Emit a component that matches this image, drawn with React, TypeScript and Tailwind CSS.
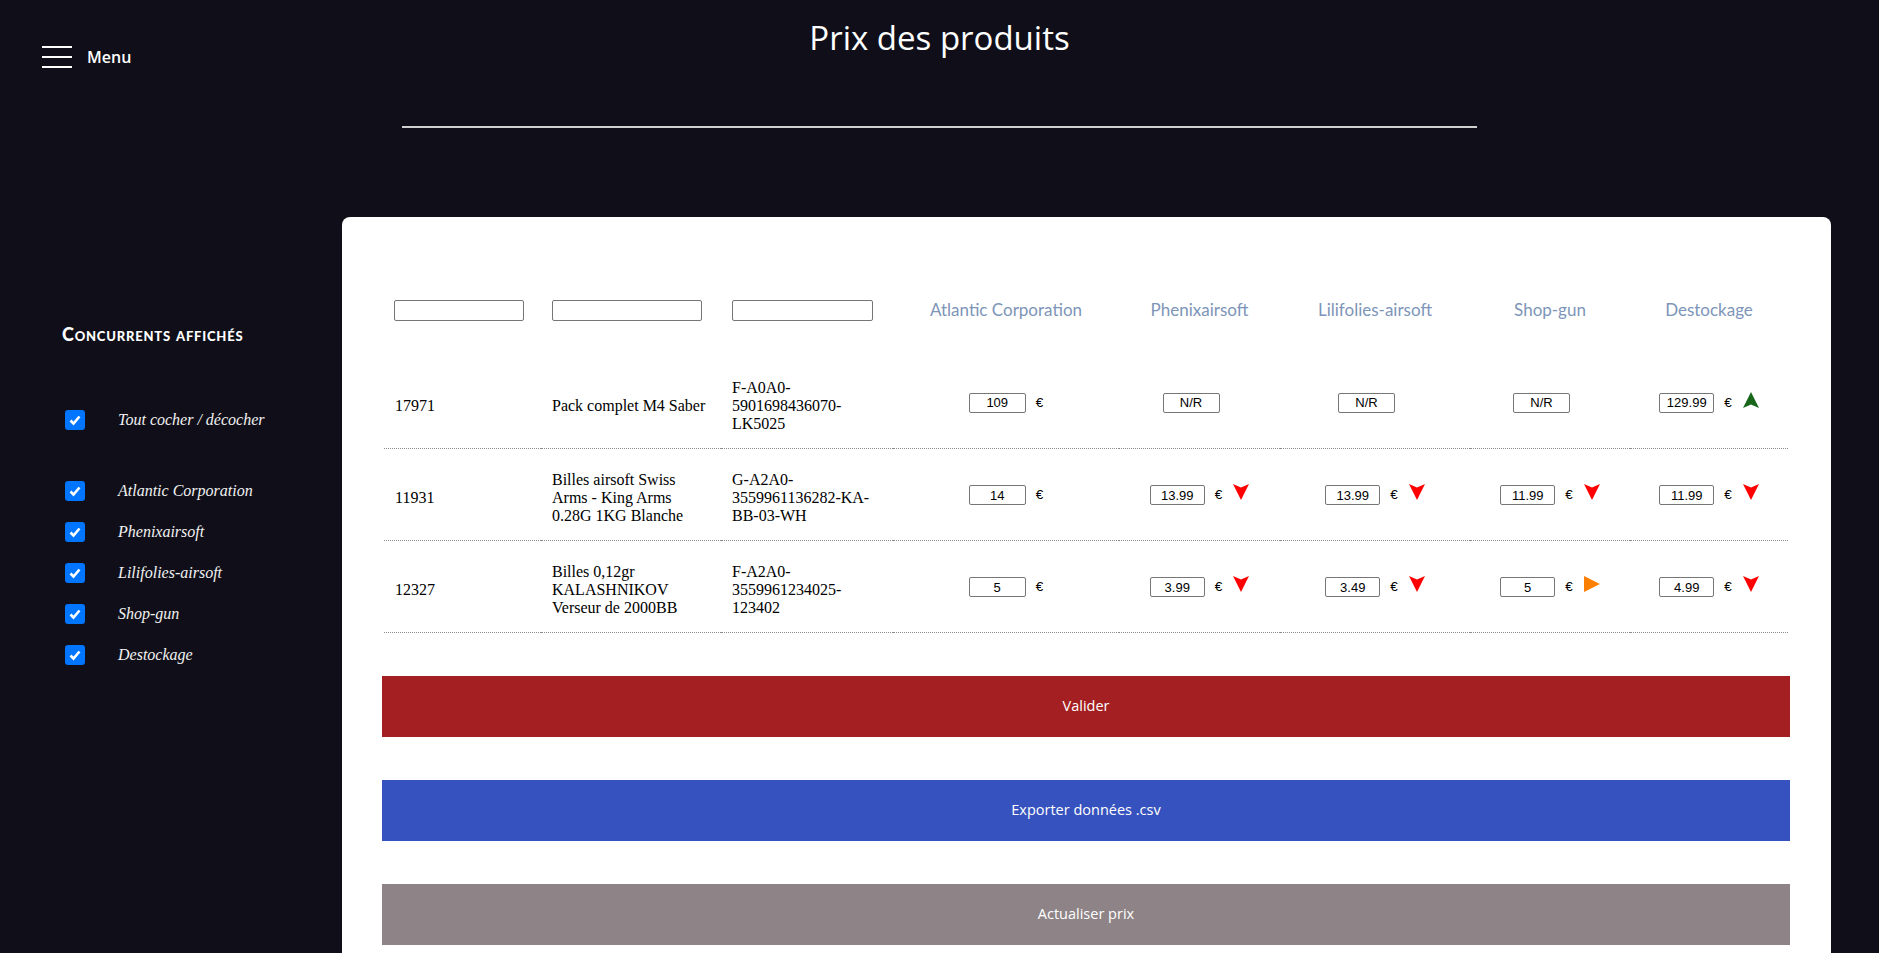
type Trend = 'up' | 'down' | 'flat';

interface Price {
  value?: string;
  trend?: Trend;
}

interface Row {
  id: string;
  name: string;
  ref: string;
  prices: Price[];
}

const competitors = ['Atlantic Corporation', 'Phenixairsoft', 'Lilifolies-airsoft', 'Shop-gun', 'Destockage'];

const rows: Row[] = [
  {
    id: '17971',
    name: 'Pack complet M4 Saber',
    ref: 'F-A0A0-5901698436070-LK5025',
    prices: [{ value: '109' }, {}, {}, {}, { value: '129.99', trend: 'up' }],
  },
  {
    id: '11931',
    name: 'Billes airsoft Swiss Arms - King Arms 0.28G 1KG Blanche',
    ref: 'G-A2A0-3559961136282-KA-BB-03-WH',
    prices: [
      { value: '14' },
      { value: '13.99', trend: 'down' },
      { value: '13.99', trend: 'down' },
      { value: '11.99', trend: 'down' },
      { value: '11.99', trend: 'down' },
    ],
  },
  {
    id: '12327',
    name: 'Billes 0,12gr KALASHNIKOV Verseur de 2000BB',
    ref: 'F-A2A0-3559961234025-123402',
    prices: [
      { value: '5' },
      { value: '3.99', trend: 'down' },
      { value: '3.49', trend: 'down' },
      { value: '5', trend: 'flat' },
      { value: '4.99', trend: 'down' },
    ],
  },
];

const TrendIcon = ({ trend }: { trend: Trend }) => {
  if (trend === 'up') {
    return (
      <svg width="16" height="16" viewBox="0 0 16 16">
        <path d="M8 0 L16 16 L8 12.5 L0 16 Z" fill="#17661a" />
      </svg>
    );
  }
  if (trend === 'flat') {
    return (
      <svg width="16" height="16" viewBox="0 0 16 16">
        <path d="M0 0 L16 8 L0 16 Z" fill="#ff8000" />
      </svg>
    );
  }
  return (
    <svg width="16" height="16" viewBox="0 0 16 16">
      <path d="M0 0 L8 3.5 L16 0 L8 16 Z" fill="#ff0000" />
    </svg>
  );
};

const PriceCell = ({ price, first }: { price: Price; first: boolean }) => {
  const inputCls =
    "h-[20px] border border-[#767676] rounded-[2px] text-center text-[13px] text-black font-['Liberation_Sans',Arial,sans-serif] outline-none";

  if (!price.value) {
    return (
      <div className="flex items-center justify-center">
        <input defaultValue="N/R" className={`${inputCls} w-[57px]`} />
        <span className="w-[17px]"></span>
      </div>
    );
  }

  return (
    <div className="flex items-center justify-center">
      <input defaultValue={price.value} className={`${inputCls} ${first ? 'w-[57px]' : 'w-[55px]'}`} />
      <span className="ml-[10px] text-[13.5px] text-black font-['Liberation_Sans',Arial,sans-serif]">€</span>
      {price.trend && (
        <span className="ml-[11px] mb-[6px] flex">
          <TrendIcon trend={price.trend} />
        </span>
      )}
    </div>
  );
};

const Checkbox = () => (
  <div className="w-5 h-5 rounded-[3px] bg-[#0075ff] flex items-center justify-center">
    <svg width="14" height="14" viewBox="0 0 14 14">
      <path d="M2.5 7.5 L5.5 10.5 L11.5 3.5" stroke="white" strokeWidth="2.6" fill="none" />
    </svg>
  </div>
);

const Sidebar = () => (
  <aside className="w-[342px] shrink-0 pl-[62px] pt-[107px]">
    <h2 className="text-[18px] leading-[20px] font-black text-white [font-variant:small-caps] tracking-[0.8px] font-['Comic_Sans_MS','Lato',sans-serif]">
      Concurrents affichés
    </h2>
    <div className="mt-[66px] ml-[3px] flex items-center gap-[33px] h-5">
      <Checkbox />
      <span className="text-[16px] italic text-[#f2f2f2] font-['Liberation_Serif',serif]">Tout cocher / décocher</span>
    </div>
    <div className="mt-[51px] ml-[3px] flex flex-col gap-[21px]">
      {competitors.map(c => (
        <div key={c} className="flex items-center gap-[33px] h-5">
          <Checkbox />
          <span className="text-[16px] italic text-[#f2f2f2] font-['Liberation_Serif',serif]">{c}</span>
        </div>
      ))}
    </div>
  </aside>
);

const filterCls = 'h-[21px] border border-[#767676] rounded-[2px] bg-white outline-none';
const textCell = 'h-[92px] pl-[11px] pr-[11px] pt-[8px] align-middle border-b border-dotted border-[#8a8a8a]';

export default function App() {
  return (
    <div className="min-h-screen bg-[#100f19] pb-[40px]">
      <header className="grid grid-cols-[1fr_auto_1fr] h-[67px]">
        <div className="pl-[42px] pt-[45px] flex items-center gap-[15px] self-start">
          <div className="w-[30px] flex flex-col gap-[8px]">
            <span className="h-[2px] bg-white"></span>
            <span className="h-[2px] bg-white"></span>
            <span className="h-[2px] bg-white"></span>
          </div>
          <span className="text-[16px] font-semibold text-white font-['Open_Sans',sans-serif]">Menu</span>
        </div>
        <h1 className="pt-[18px] text-[33px] leading-[40px] text-white font-['Open_Sans',sans-serif]">Prix des produits</h1>
        <div></div>
      </header>
      <div className="mt-[59px] mx-auto w-[1075px] h-[2px] bg-[#cfcfcf]"></div>

      <main className="mt-[89px] flex">
        <Sidebar />
        <section className="w-[1489px] bg-white rounded-t-[8px] pt-[47px] pl-[40px] pb-[40px]">
          <div className="w-[1408px]">
            <table className="ml-[2px] table-fixed w-[1404px] text-[16px] leading-[18px] text-black font-['Liberation_Serif',serif]">
              <colgroup>
                <col className="w-[157px]" />
                <col className="w-[180px]" />
                <col className="w-[172px]" />
                <col className="w-[226px]" />
                <col className="w-[161px]" />
                <col className="w-[190px]" />
                <col className="w-[160px]" />
                <col className="w-[158px]" />
              </colgroup>
              <thead>
                <tr>
                  <th className="h-[92px] pl-[10px] text-left font-normal">
                    <input className={`${filterCls} w-[130px]`} />
                  </th>
                  <th className="h-[92px] pl-[11px] text-left font-normal">
                    <input className={`${filterCls} w-[150px]`} />
                  </th>
                  <th className="h-[92px] pl-[11px] text-left font-normal">
                    <input className={`${filterCls} w-[141px]`} />
                  </th>
                  {competitors.map(c => (
                    <th key={c} className="h-[92px] text-center font-normal text-[17px] text-[#7d95b8] font-['Comic_Sans_MS','Lato',sans-serif]">
                      {c}
                    </th>
                  ))}
                </tr>
              </thead>
              <tbody>
                {rows.map(r => (
                  <tr key={r.id}>
                    <td className={textCell}>{r.id}</td>
                    <td className={textCell}>{r.name}</td>
                    <td className={textCell}>{r.ref}</td>
                    {r.prices.map((p, i) => (
                      <td key={i} className="h-[92px] pt-[2px] align-middle border-b border-dotted border-[#8a8a8a]">
                        <PriceCell price={p} first={i === 0} />
                      </td>
                    ))}
                  </tr>
                ))}
              </tbody>
            </table>

            <div className="mt-[43px] flex flex-col gap-[43px] font-['Open_Sans',sans-serif] text-[14.5px] font-medium text-white">
              <button className="h-[61px] w-full bg-[#a31f21]">Valider</button>
              <button className="h-[61px] w-full bg-[#3652be]">Exporter données .csv</button>
              <button className="h-[61px] w-full bg-[#8e8487]">Actualiser prix</button>
            </div>
          </div>
        </section>
      </main>
    </div>
  );
}
